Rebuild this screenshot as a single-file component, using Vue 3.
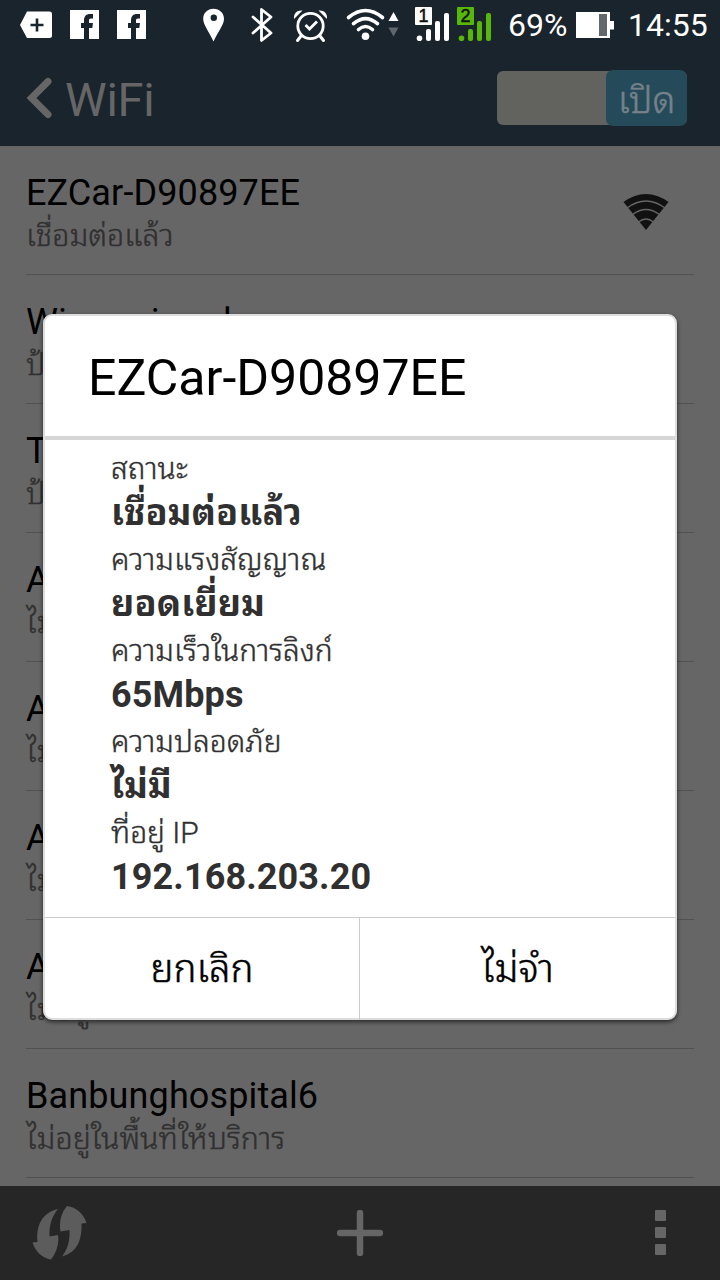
<template>
  <div class="screen">
    <header class="status-bar">
      <svg class="status-icon status-icon--badge" viewBox="20 0 32 50">
        <path d="M27 11.5H49.5Q52 11.5 52 14V35.500Q52 38 49.500 38H27L20 25Z" fill="#fff" />
        <path d="M30.500 25H43.500M37 18.500V31.500" stroke="#1a242c" stroke-width="2.600" />
      </svg>
      <svg v-for="i in 2" :key="i" class="status-icon status-icon--fb" viewBox="70 0 29 50">
        <rect x="70" y="10" width="29" height="29" fill="#fff" />
        <path d="M84 39V28H81V23H84V20.500C84 16 86.500 14 90 14H93V18.500H91C89.500 18.500 89 19.200 89 20.500V23H93L92.300 28H89V39Z" fill="#1a242c" />
      </svg>
      <svg class="status-icon status-icon--pin" viewBox="203 0 22 50">
        <path d="M213.500 8.700C207.500 8.700 203.200 13 203.200 18.800C203.200 25 209.500 32.500 213.500 41.500C217.500 32.500 224 25 224 18.800C224 13 219.500 8.700 213.500 8.700Z" fill="#fff" />
        <circle cx="213.800" cy="17.800" r="3.200" fill="#1a242c" />
      </svg>
      <svg class="status-icon status-icon--bt" viewBox="250 0 24 50">
        <path d="M253 17L271 33L261.500 40.500V9.500L271 17L253 33" fill="none" stroke="#fff" stroke-width="2.800" stroke-linejoin="round" stroke-linecap="round" />
      </svg>
      <svg class="status-icon status-icon--alarm" viewBox="293 0 35 50">
        <circle cx="310.500" cy="26" r="12.700" fill="none" stroke="#fff" stroke-width="2.800" />
        <path d="M301 36L297.500 40.500M320 36L323.500 40.500" stroke="#fff" stroke-width="3" stroke-linecap="round" />
        <path d="M294 19C293.500 13 297 10 302.500 10.500ZM327 19C327.500 13 324 10 318.500 10.500Z" fill="#fff" />
        <path d="M305.500 25L309.500 29L317 21.500" fill="none" stroke="#fff" stroke-width="2.800" />
      </svg>
      <svg class="status-icon status-icon--wifi" viewBox="345 0 54 50">
        <g fill="none" stroke="#fff" stroke-width="3.600" stroke-linecap="round">
          <path d="M348.500 17.500Q365.500 3.500 382.500 17.500" />
          <path d="M353.500 23.700Q365.500 13.500 377.500 23.700" />
          <path d="M358.500 29.500Q365.500 23.500 372.500 29.500" />
        </g>
        <circle cx="365.500" cy="36.300" r="3.800" fill="#fff" />
        <path d="M393.500 12L398.500 21H388.500Z" fill="#fff" />
        <path d="M393.500 36.500L398.500 27.500H388.500Z" fill="#5f676c" />
      </svg>
      <svg v-for="sim in sims" :key="sim.label" class="status-icon status-icon--signal" viewBox="415 0 34 50">
        <rect x="415" y="7" width="17" height="18" rx="1" :fill="sim.color" />
        <text x="423.500" y="22" class="sim-label">{{ sim.label }}</text>
        <circle cx="419.500" cy="38.200" r="2.800" :fill="sim.color" />
        <rect x="426" y="29" width="5" height="12" rx="2" :fill="sim.color" />
        <rect x="435" y="21" width="5" height="20" rx="2" :fill="sim.color" />
        <rect x="444" y="13" width="5" height="28" rx="2" :fill="sim.color" />
      </svg>
      <span class="status-text status-text--battery">69%</span>
      <svg class="status-icon status-icon--battery" viewBox="576 0 38 50">
        <path d="M576 12H610V21H614V29.500H610V38H576Z" fill="#fff" />
        <rect x="599" y="14" width="8" height="22" fill="#62686c" />
      </svg>
      <span class="status-text status-text--time">14:55</span>
    </header>

    <div class="title-bar">
      <svg class="title-bar__back" viewBox="0 0 26 42">
        <path d="M22 4.500L5.500 21L22 37.500" fill="none" stroke="#666" stroke-width="7" stroke-linecap="round" stroke-linejoin="miter" />
      </svg>
      <h1 class="title-bar__title">WiFi</h1>
      <div class="toggle">
        <div class="toggle__knob">เปิด</div>
      </div>
    </div>

    <main class="network-list">
      <div v-for="(network, index) in networks" :key="index" class="network">
        <div class="network__info">
          <div class="network__name">{{ network.name }}</div>
          <div class="network__state">{{ network.state }}</div>
        </div>
        <svg v-if="network.connected" class="network__signal" viewBox="0 0 46 38">
          <path d="M.500 9Q23-7 45.500 9L23 37Z" fill="#111" />
          <path d="M4 15Q23 1 42 15M9.500 21.500Q23 11.500 36.500 21.500M15.500 29Q23 23 30.500 29" fill="none" stroke="#666" stroke-width="1.500" />
        </svg>
      </div>
    </main>

    <footer class="toolbar">
      <svg class="toolbar__wps" viewBox="0 0 56 56">
        <path d="M26 4C10 8 4 20 5.500 37L.500 37.500C3 46 10 53 19 54.500C24 48 27.500 39 26 30L17.500 31.500C17 20 20 11 26 4Z" fill="#5c5c5c" />
        <path d="M35 1C44 2 52 9 54.500 18L49.500 18.500C50 34 46 47 30 51.500C36 44 38 35 37.500 25L28.500 26.500C27 17 29 8 35 1Z" fill="#5c5c5c" />
      </svg>
      <svg class="toolbar__add" viewBox="0 0 46 46">
        <path d="M3 23H43M23 3V43" stroke="#666" stroke-width="6.500" stroke-linecap="round" />
      </svg>
      <div class="toolbar__more">
        <span v-for="i in 3" :key="i" class="toolbar__dot"></span>
      </div>
    </footer>

    <div class="dialog" role="dialog">
      <h2 class="dialog__title">EZCar-D90897EE</h2>
      <dl class="dialog__body">
        <div v-for="detail in details" :key="detail.label" class="detail">
          <dt class="detail__label">{{ detail.label }}</dt>
          <dd class="detail__value">{{ detail.value }}</dd>
        </div>
      </dl>
      <div class="dialog__actions">
        <button class="dialog__button">ยกเลิก</button>
        <button class="dialog__button">ไม่จำ</button>
      </div>
    </div>
  </div>
</template>

<script setup>
const sims = [
  { label: '1', color: '#fff' },
  { label: '2', color: '#58b80a' }
]

const outOfRange = 'ไม่อยู่ในพื้นที่ให้บริการ'

const networks = [
  { name: 'EZCar-D90897EE', state: 'เชื่อมต่อแล้ว', connected: true },
  { name: 'Wimanrinard', state: 'ป้อง' },
  { name: 'TP', state: 'ป้อง' },
  { name: 'AP', state: 'ไม่อยู่' },
  { name: 'AP', state: 'ไม่อยู่' },
  { name: 'AP', state: 'ไม่อยู่' },
  { name: 'AP', state: 'ไม่อยู่' },
  { name: 'Banbunghospital6', state: outOfRange }
]

const details = [
  { label: 'สถานะ', value: 'เชื่อมต่อแล้ว' },
  { label: 'ความแรงสัญญาณ', value: 'ยอดเยี่ยม' },
  { label: 'ความเร็วในการลิงก์', value: '65Mbps' },
  { label: 'ความปลอดภัย', value: 'ไม่มี' },
  { label: 'ที่อยู่ IP', value: '192.168.203.20' }
]
</script>

<style>
body {
  background: #666;
}
</style>

<style scoped>
.screen {
  position: relative;
  display: flex;
  flex-direction: column;
  width: 720px;
  height: 1280px;
  overflow: hidden;
  background: #666;
  font-family: Roboto, "Noto Sans Thai Looped", "Liberation Sans", sans-serif;
  white-space: nowrap;
}

/* Status bar */
.status-bar {
  display: flex;
  align-items: center;
  height: 50px;
  background: #1a242c;
  color: #fff;
}

.status-icon {
  flex: none;
  height: 50px;
}

.status-icon--badge { width: 32px; margin-left: 20px; }
.status-icon--fb { width: 29px; margin-left: 18px; }
.status-icon--pin { width: 22px; margin-left: 57px; }
.status-icon--bt { width: 24px; margin-left: 25px; }
.status-icon--alarm { width: 35px; margin-left: 19px; }
.status-icon--wifi { width: 54px; margin-left: 17px; }
.status-icon--signal { width: 34px; margin-left: 16px; }
.status-icon--signal + .status-icon--signal { margin-left: 8px; }
.status-icon--battery { width: 38px; }

.sim-label {
  font-family: "Liberation Sans", sans-serif;
  font-size: 18px;
  text-anchor: middle;
  fill: #111;
  stroke: #111;
  stroke-width: 0.5px;
}

.status-text {
  font-size: 32px;
  line-height: 50px;
}

.status-text--battery {
  width: 68px;
  margin-left: 17px;
}

.status-text--time {
  margin-left: 14px;
}

/* Title bar */
.title-bar {
  display: flex;
  align-items: center;
  box-sizing: border-box;
  height: 96px;
  padding: 0 33px 0 26px;
  background: #1a242c;
}

.title-bar__back {
  width: 26px;
  height: 42px;
}

.title-bar__title {
  margin: 3px 0 0 13px;
  color: #666;
  font-size: 47px;
  font-weight: 400;
  line-height: 60px;
  letter-spacing: -0.3px;
}

.toggle {
  display: flex;
  justify-content: flex-end;
  align-items: center;
  width: 190px;
  height: 54px;
  margin-left: auto;
  border-radius: 6px;
  background: #62625f;
}

.toggle__knob {
  width: 81px;
  height: 56px;
  border-radius: 7px;
  background: #254a5a;
  color: #75828a;
  font-size: 37px;
  font-weight: 300;
  line-height: 62px;
  text-align: center;
  -webkit-text-stroke: 0.5px currentColor;
}

/* Networks */
.network-list {
  flex: 1;
  padding: 0 26px;
}

.network {
  display: flex;
  justify-content: space-between;
  box-sizing: border-box;
  height: 129px;
  padding-top: 25px;
  border-bottom: 1px solid #515151;
}

.network__name {
  color: #000;
  font-size: 36px;
  line-height: 44px;
  letter-spacing: 0.12px;
}

.network__state {
  margin-top: 5px;
  color: #303030;
  font-size: 30.400px;
  font-weight: 300;
  line-height: 32px;
  -webkit-text-stroke: 0.4px currentColor;
}

.network__signal {
  width: 46px;
  height: 38px;
  margin: 22px 25px 0 0;
}

/* Toolbar */
.toolbar {
  display: grid;
  grid-template-columns: 1fr 46px 1fr;
  align-items: center;
  height: 94px;
  background: #262626;
}

.toolbar__wps {
  width: 56px;
  height: 56px;
  margin-left: 32px;
}

.toolbar__add {
  width: 46px;
  height: 46px;
}

.toolbar__more {
  display: flex;
  flex-direction: column;
  gap: 6px;
  justify-self: end;
  margin: 0 54px 2px 0;
}

.toolbar__dot {
  width: 11px;
  height: 11px;
  border-radius: 1px;
  background: #666;
}

/* Dialog */
.dialog {
  position: absolute;
  top: 314px;
  left: 43px;
  display: flex;
  flex-direction: column;
  box-sizing: border-box;
  width: 634px;
  height: 706px;
  border: 2px solid #ddd;
  border-radius: 9px;
  background: #fff;
  box-shadow: 0 2px 4px rgba(0, 0, 0, 0.6);
}

.dialog__title {
  box-sizing: border-box;
  height: 124px;
  margin: 0;
  padding-left: 43px;
  border-bottom: 4px solid #d6d6d6;
  color: #000;
  font-size: 50px;
  font-weight: 400;
  line-height: 124px;
}

.dialog__body {
  flex: 1;
  margin: 0;
  padding: 9px 0 0 66px;
  color: #303030;
}

.detail {
  margin-bottom: 3px;
}

.detail__label {
  font-size: 30px;
  font-weight: 300;
  line-height: 40px;
  -webkit-text-stroke: 0.4px currentColor;
}

.detail__value {
  margin: 1px 0 0;
  font-size: 36px;
  font-weight: 700;
  line-height: 47px;
  letter-spacing: 0.12px;
}

.dialog__actions {
  display: grid;
  grid-template-columns: 314px 1fr;
  height: 100px;
  border-top: 1px solid #ccc;
}

.dialog__button {
  padding: 0;
  border: 0;
  background: none;
  color: #000;
  font-family: inherit;
  font-size: 38.500px;
  font-weight: 300;
  line-height: 102px;
  -webkit-text-stroke: 0.5px currentColor;
}

.dialog__button + .dialog__button {
  border-left: 1px solid #ccc;
}
</style>
